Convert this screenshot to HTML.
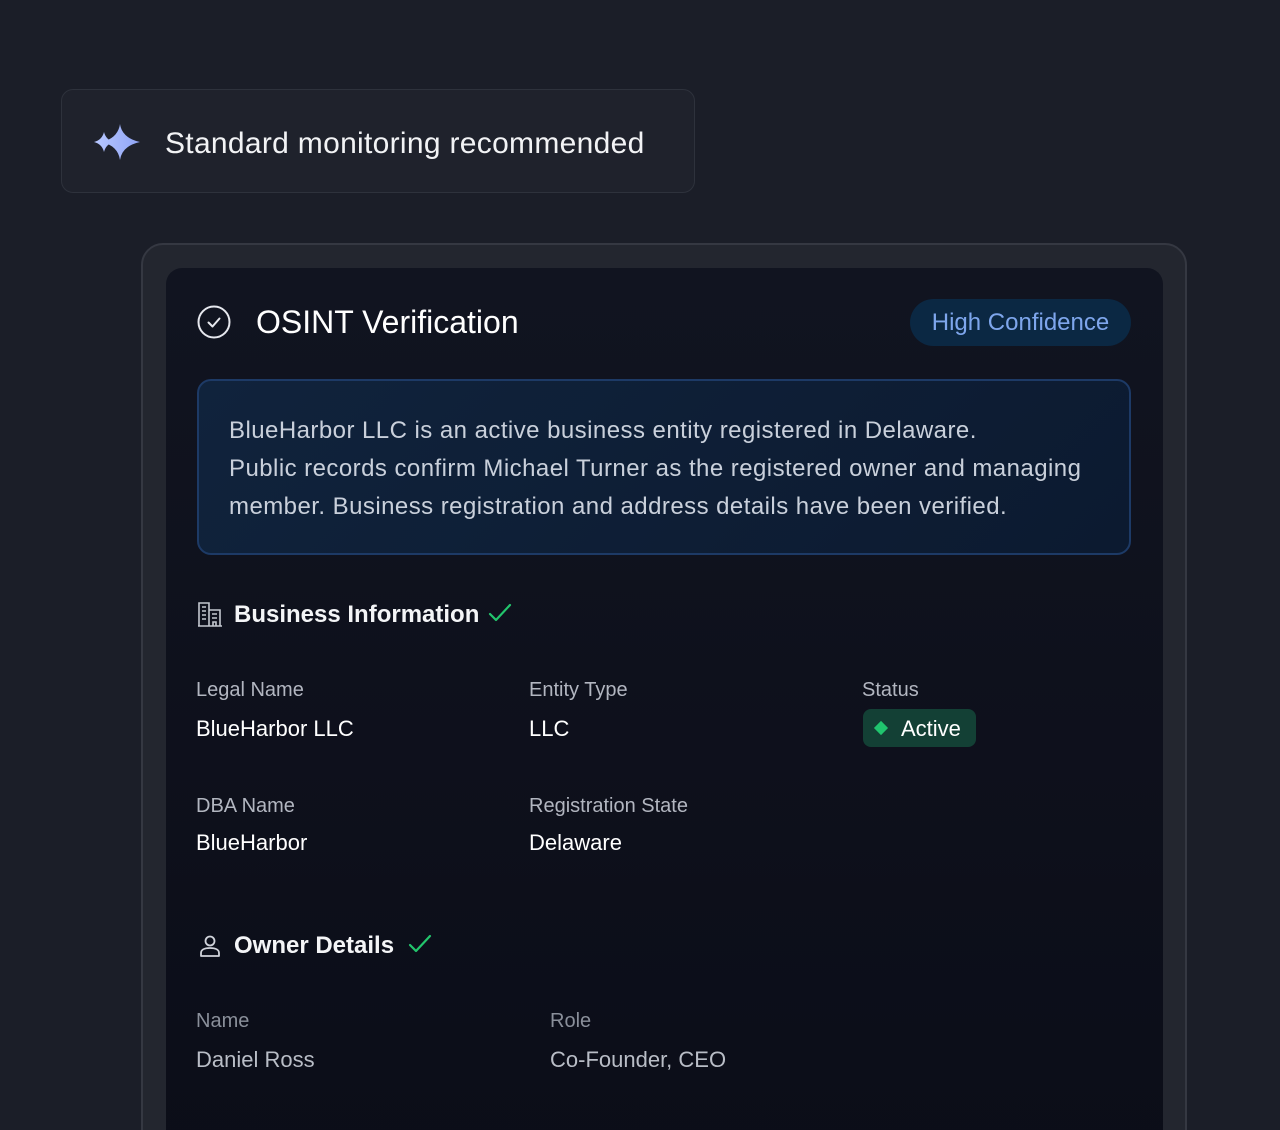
<!DOCTYPE html>
<html><head><style>
*{margin:0;padding:0;box-sizing:border-box}
html,body{width:1280px;height:1130px;overflow:hidden}
body{background:#1b1e28;font-family:"Liberation Sans",sans-serif;position:relative;color:#fff}
.a{position:absolute}
.top{left:61px;top:89px;width:634px;height:104px;border-radius:12px;background:#1f222c;border:1px solid #2e323c}
.top span{position:absolute;left:103px;top:37px;font-size:30px;color:#f2f3f5;letter-spacing:.3px}
.frame{left:141px;top:243px;width:1046px;height:920px;border-radius:22px;background:#23262f;border:2px solid #353842}
.panel{left:166px;top:268px;width:997px;height:900px;border-radius:16px;background:linear-gradient(180deg,#111420,#0b0d18)}
.title{left:256px;top:304px;font-size:32px;letter-spacing:0;color:#fff}
.badge{left:910px;top:299px;width:221px;height:47px;border-radius:24px;background:#0b2843;color:#7ea6ec;font-size:24px;text-align:center;line-height:47px}
.sum{left:197px;top:379px;width:934px;height:176px;border-radius:14px;border:2px solid #1d3a66;background:linear-gradient(135deg,#10233c,#0c1a30);padding:31px 0 0 30px;font-size:24px;line-height:38px;color:#c9d0db;letter-spacing:.45px;white-space:nowrap}
.h{font-size:24px;font-weight:bold;color:#f4f5f7}
.l{font-size:20px;color:#b2b6c0}
.v{font-size:22px;color:#fff}
.l2{font-size:20px;color:#8a8f9a}
.v2{font-size:22px;color:#b9bdc6}
.act{left:863px;top:709px;width:113px;height:38px;border-radius:8px;background:#134035}
.act i{position:absolute;left:13px;top:14px;width:10px;height:10px;background:#20c46e;transform:rotate(45deg)}
.act span{position:absolute;left:38px;top:7px;font-size:22px;color:#fff}
</style></head><body>
<div class="a top">
<svg class="a" style="left:30px;top:34px" width="50" height="36" viewBox="0 0 50 36"><defs><linearGradient id="g" x1="0" x2="1"><stop offset="0" stop-color="#b8c8ff"/><stop offset="1" stop-color="#8fa4f5"/></linearGradient></defs><path d="M12 8 Q14 16 22 18 Q14 20 12 28 Q10 20 2 18 Q10 16 12 8Z M28 0 Q30 14 48 18 Q30 22 28 36 Q26 22 10 18 Q26 14 28 0Z" fill="url(#g)"/></svg>
<span>Standard monitoring recommended</span></div>
<div class="a frame"></div>
<div class="a panel"></div>
<svg class="a" style="left:197px;top:305px" width="34" height="34" viewBox="0 0 34 34" fill="none" stroke="#e6e8ee" stroke-width="2"><circle cx="17" cy="17" r="15.5"/><path d="M11.5 17.5l4 4 7-8" stroke-linecap="round" stroke-linejoin="round"/></svg>
<div class="a title">OSINT Verification</div>
<div class="a badge">High Confidence</div>
<div class="a sum">BlueHarbor LLC is an active business entity registered in Delaware.<br>Public records confirm Michael Turner as the registered owner and managing<br>member. Business registration and address details have been verified.</div>
<svg class="a" style="left:197px;top:601px" width="26" height="26" viewBox="0 0 26 26" fill="none" stroke="#c4c8d0" stroke-width="1.6"><path d="M2 25V2h10v23M12 9h11v16M1 25h24M5 6h4M5 10h4M5 14h4M5 18h4M15 13h5M15 17h5M16 25v-4h3v4"/></svg>
<div class="a h" style="left:234px;top:601px">Business Information</div>
<svg class="a" style="left:488px;top:602px" width="24" height="22" viewBox="0 0 24 22" fill="none" stroke="#22c56c" stroke-width="2.2" stroke-linecap="round" stroke-linejoin="round"><path d="M2 12l6 6L22 3"/></svg>
<div class="a l" style="left:196px;top:679px">Legal Name</div>
<div class="a v" style="left:196px;top:716px">BlueHarbor LLC</div>
<div class="a l" style="left:529px;top:679px">Entity Type</div>
<div class="a v" style="left:529px;top:716px">LLC</div>
<div class="a l" style="left:862px;top:679px">Status</div>
<div class="a act"><i></i><span>Active</span></div>
<div class="a l" style="left:196px;top:795px">DBA Name</div>
<div class="a v" style="left:196px;top:830px">BlueHarbor</div>
<div class="a l" style="left:529px;top:795px">Registration State</div>
<div class="a v" style="left:529px;top:830px">Delaware</div>
<svg class="a" style="left:199px;top:934px" width="22" height="24" viewBox="0 0 22 24" fill="none" stroke="#d0d3da" stroke-width="1.8"><circle cx="11" cy="7" r="4.5"/><path d="M2 22v-3c0-3 3-5 9-5s9 2 9 5v3z" stroke-linejoin="round"/></svg>
<div class="a h" style="left:234px;top:932px">Owner Details</div>
<svg class="a" style="left:408px;top:933px" width="24" height="22" viewBox="0 0 24 22" fill="none" stroke="#22c56c" stroke-width="2.2" stroke-linecap="round" stroke-linejoin="round"><path d="M2 12l6 6L22 3"/></svg>
<div class="a l2" style="left:196px;top:1010px">Name</div>
<div class="a v2" style="left:196px;top:1047px">Daniel Ross</div>
<div class="a l2" style="left:550px;top:1010px">Role</div>
<div class="a v2" style="left:550px;top:1047px">Co-Founder, CEO</div>
</body></html>
